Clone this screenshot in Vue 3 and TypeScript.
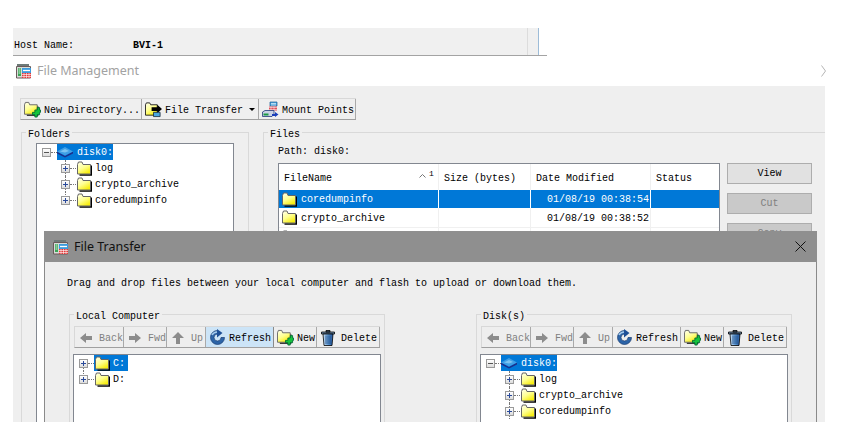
<script setup lang="ts">
interface TreeNode { label: string; level: number; icon: string; open?: boolean; selected?: boolean; line?: string }
interface ToolButton { label: string; icon: string; disabled?: boolean; hover?: boolean; caret?: boolean }

const diskTree = (tail: string): TreeNode[] => [
  { label: 'disk0:', level: 0, icon: 'disk', open: true, selected: true },
  { label: 'log', level: 1, icon: 'folder', line: 'both' },
  { label: 'crypto_archive', level: 1, icon: 'folder', line: 'both' },
  { label: 'coredumpinfo', level: 1, icon: 'folder', line: tail },
]
const localTree: TreeNode[] = [
  { label: 'C:', level: 0, icon: 'folder', selected: true, line: 'down' },
  { label: 'D:', level: 0, icon: 'folder', line: 'up' },
]
const mainTools: ToolButton[] = [
  { label: 'New Directory...', icon: 'folder-new' },
  { label: 'File Transfer', icon: 'transfer', caret: true },
  { label: 'Mount Points', icon: 'mount' },
]
const navTools = (hover: boolean): ToolButton[] => [
  { label: 'Back', icon: 'back', disabled: true },
  { label: 'Fwd', icon: 'fwd', disabled: true },
  { label: 'Up', icon: 'up', disabled: true },
  { label: 'Refresh', icon: 'refresh', hover },
  { label: 'New', icon: 'folder-new' },
  { label: 'Delete', icon: 'trash' },
]
const files = [
  { name: 'coredumpinfo', date: '01/08/19 00:38:54', selected: true },
  { name: 'crypto_archive', date: '01/08/19 00:38:52', selected: false },
  { name: 'log', date: '01/08/19 00:38:50', selected: false },
]
const panes = [
  { title: 'Local Computer', tools: navTools(true), tree: localTree },
  { title: 'Disk(s)', tools: navTools(false), tree: diskTree('both') },
]
const folderTree = diskTree('up')
</script>

<template>
  <div class="page">
    <svg class="defs" width="0" height="0" aria-hidden="true">
      <defs>
        <linearGradient id="fold" x1="0" y1="0" x2="0.6" y2="1">
          <stop offset="0" stop-color="#fffff0" />
          <stop offset="0.55" stop-color="#ffff90" />
          <stop offset="1" stop-color="#f8ee10" />
        </linearGradient>
        <linearGradient id="can" x1="0" y1="0" x2="1" y2="0">
          <stop offset="0" stop-color="#cfe4f7" />
          <stop offset="0.5" stop-color="#5f9bd6" />
          <stop offset="1" stop-color="#1d4f96" />
        </linearGradient>
        <symbol id="folder" viewBox="0 0 15 15">
          <path d="M14.200 4.500V14H2.500" fill="none" stroke="#000" stroke-width="1.600" />
          <path d="M.5 3.500 1.500 1h3.500l1 2.500h7.500v9.500H.5Z" fill="url(#fold)" stroke="#666" />
        </symbol>
        <symbol id="folder-new" viewBox="0 0 18 18">
          <path d="M14.500 5.500V15H3" fill="none" stroke="#000" stroke-width="1.400" />
          <path d="M.5 4 1.500 1.500h3.500l1 2.500h8v10H.5Z" fill="url(#fold)" stroke="#666" />
          <path d="M11.500 9.500h2.500v-2.500h2.500v2.500h1v2.500h-1v2.500H14v2.500h-2.500V14.500H9V12h2.500Z" fill="#14c43c" stroke="#063" stroke-width=".9" />
        </symbol>
        <symbol id="disk" viewBox="0 0 16 11">
          <path d="M0 5 8 9.500 16 5V7L8 11 0 7Z" fill="#1c2f8c" />
          <path d="M0 5 8 .5 16 5 8 9Z" fill="#3f9fe6" />
          <path d="M3 5 8 2.500 12 4.500 8 6Z" fill="#7cc4f2" />
        </symbol>
        <symbol id="transfer" viewBox="0 0 18 16">
          <path d="M.5 3 1.500 1h3.500l1 2h7v11H.5Z" fill="url(#fold)" stroke="#222" />
          <path d="M7 5.500h6V3l5 4.500-5 4.500V9.500H7Z" fill="#000" />
          <path d="M9 11h7v4.500H9Z" fill="#4aa7e0" stroke="#123" stroke-width=".8" />
        </symbol>
        <symbol id="mount" viewBox="0 0 17 16">
          <path d="M8 .5h7v4H8Z" fill="#4aa7e0" stroke="#1c5b94" stroke-width=".7" />
          <path d="M9 2h5M9 3.500h5" stroke="#fff" stroke-width=".6" />
          <path d="M7 5h8v4H7Z" fill="#e0505a" />
          <path d="M7 6h8M7 8h8M9 5v4M12 5v4" stroke="#fff" stroke-width=".5" />
          <path d="M.5 10.500 3 9h9v3.500l-2 2.500H.5Z" fill="#c9d3e6" stroke="#223a7a" stroke-width=".8" />
          <path d="M1.500 12h5v2h-5Z" fill="#1c9a44" />
          <path d="M10 12.500h3V10.500l3.500 2.500-3.500 2.500v-1h-3Z" fill="#1b3fbb" />
        </symbol>
        <symbol id="app-mark" viewBox="0 0 16 16">
          <path d="M1 1h12v3H1Z" fill="#6f7a78" />
          <path d="M.5 3.500h14V15H.5Z" fill="#d8dcd8" stroke="#6a5a5a" />
          <path d="M2 5h3v8H2Z" fill="#3aa655" />
          <path d="M2.500 6h2M2.500 8h2M2.500 10h2" stroke="#fff" stroke-width=".8" />
          <path d="M6 5h9v5H6Z" fill="#3b9bdc" />
          <path d="M7 7.500h7" stroke="#fff" stroke-width="1.300" />
          <path d="M6 10h9v5H6Z" fill="#e23b3b" />
          <path d="M6 11.500h9M6 13.500h9M8 10v5M10.500 10v5M13 10v5" stroke="#fff" stroke-width=".6" />
        </symbol>
        <symbol id="back" viewBox="0 0 12 12"><path d="M0 6 6 1v3h6v4H6v3Z" fill="#8c8c8c" /></symbol>
        <symbol id="fwd" viewBox="0 0 12 12"><path d="M12 6 6 1v3H0v4h6v3Z" fill="#8c8c8c" /></symbol>
        <symbol id="up" viewBox="0 0 12 12"><path d="M6 0 12 6H8v6H4V6H0Z" fill="#8c8c8c" /></symbol>
        <symbol id="refresh" viewBox="0 0 17 17">
          <path d="M8.500 1.500a7 7 0 1 0 7 7h-3.500a3.500 3.500 0 1 1-3.500-3.500Z" fill="#2c64a8" stroke="#173b70" stroke-width=".7" />
          <path d="M8 0 13.500 4 8 8.500Z" fill="#1d4f96" />
          <path d="M3 6a6 6 0 0 1 5-3" fill="none" stroke="#a8cdee" stroke-width="1.500" />
        </symbol>
        <symbol id="trash" viewBox="0 0 14 16">
          <path d="M5 .5h4v1.500H5ZM.5 2h13v2H.5Z" fill="#6f8fb0" stroke="#000" stroke-width=".8" />
          <path d="M2 4h10l-1 11.500H3Z" fill="url(#can)" stroke="#000" stroke-width=".8" />
          <path d="M5 5.500v8.500M7 5.500v8.500M9 5.500v8.500" stroke="#123a70" stroke-width=".7" />
        </symbol>
      </defs>
    </svg>

    <header class="host">
      <span class="host-key">Host Name:</span>
      <strong class="host-value">BVI-1</strong>
      <i class="host-rule" />
      <i class="host-blue" />
    </header>

    <div class="title">
      <svg class="title-icon"><use href="#app-mark" /></svg>
      <span>File Management</span>
      <svg class="chevron" viewBox="0 0 5 12"><path d="M.5 .5 4.500 6 .5 11.500" fill="none" stroke="#b5b5b5" /></svg>
    </div>

    <main class="panel">
      <div class="toolbar main-tools">
        <button v-for="t in mainTools" :key="t.label" class="tool" type="button">
          <svg class="ico" :class="`ico-${t.icon}`"><use :href="`#${t.icon}`" /></svg>
          <span>{{ t.label }}</span>
          <i v-if="t.caret" class="caret" />
        </button>
      </div>

      <div class="groups">
        <fieldset class="group folders">
          <legend>Folders</legend>
          <div class="tree folder-tree">
            <div v-for="n in folderTree" :key="n.label" class="row" :class="`lvl-${n.level}`">
              <span class="exp" :class="[n.open ? 'minus' : 'plus', n.line ? `line-${n.line}` : '']" />
              <span class="dash" />
              <span class="node" :class="{ sel: n.selected, isdisk: n.icon === 'disk' }">
                <svg class="node-ico" :class="`ni-${n.icon}`"><use :href="`#${n.icon}`" /></svg>
                <span class="node-label">{{ n.label }}</span>
              </span>
            </div>
          </div>
        </fieldset>

        <fieldset class="group filesgrp">
          <legend>Files</legend>
          <div class="path">Path: disk0:</div>
          <div class="files-row">
            <div class="table">
              <div class="tr head">
                <span class="td c-name">FileName<i class="sort"><svg viewBox="0 0 7 4"><path d="M.5 3.500 3.500 .5 6.500 3.500" fill="none" stroke="#777" /></svg><b>1</b></i></span>
                <span class="td c-size">Size (bytes)</span>
                <span class="td c-date">Date Modified</span>
                <span class="td c-stat">Status</span>
              </div>
              <div v-for="f in files" :key="f.name" class="tr" :class="{ picked: f.selected }">
                <span class="td c-name">
                  <svg class="file-ico"><use href="#folder" /></svg>{{ f.name }}
                </span>
                <span class="td c-size" />
                <span class="td c-date date">{{ f.date }}</span>
                <span class="td c-stat" />
              </div>
            </div>
            <div class="side">
              <button class="sbtn" type="button">View</button>
              <button class="sbtn off" type="button">Cut</button>
              <button class="sbtn off" type="button">Copy</button>
            </div>
          </div>
        </fieldset>
      </div>

      <section class="dialog">
        <div class="dlg-head">
          <svg class="title-icon"><use href="#app-mark" /></svg>
          <span>File Transfer</span>
          <svg class="close" viewBox="0 0 11 11"><path d="M.5 .5 10.500 10.500M10.500 .5 .5 10.500" stroke="#111" fill="none" /></svg>
        </div>
        <div class="dlg-body">
          <p class="msg">Drag and drop files between your local computer and flash to upload or download them.</p>
          <div class="panes">
            <fieldset v-for="p in panes" :key="p.title" class="group pane">
              <legend>{{ p.title }}</legend>
              <div class="toolbar nav-tools">
                <button v-for="t in p.tools" :key="t.label" class="tool" :class="{ dim: t.disabled, hot: t.hover }" type="button">
                  <svg class="ico" :class="`ico-${t.icon}`"><use :href="`#${t.icon}`" /></svg>
                  <span>{{ t.label }}</span>
                </button>
              </div>
              <div class="tree pane-tree">
                <div v-for="n in p.tree" :key="n.label" class="row" :class="`lvl-${n.level}`">
                  <span class="exp" :class="[n.open ? 'minus' : 'plus', n.line ? `line-${n.line}` : '']" />
                  <span class="dash" />
                  <span class="node" :class="{ sel: n.selected, isdisk: n.icon === 'disk' }">
                    <svg class="node-ico" :class="`ni-${n.icon}`"><use :href="`#${n.icon}`" /></svg>
                    <span class="node-label">{{ n.label }}</span>
                  </span>
                </div>
              </div>
            </fieldset>
          </div>
        </div>
      </section>
    </main>
  </div>
</template>

<style scoped>
.page {
  width: 845px;
  height: 445px;
  overflow: hidden;
  background: #fff;
  padding-top: 28px;
  box-sizing: border-box;
  font: 10px/12px "Liberation Mono", monospace;
  color: #000;
}
.defs { position: absolute; }
.host {
  position: relative;
  box-sizing: border-box;
  margin-left: 13px;
  width: 534px;
  height: 28px;
  border-bottom: 1px solid #a3a3a3;
  background: linear-gradient(to right, #f0f0f0 525px, #fff 525px);
  display: flex;
  align-items: center;
  padding: 8px 0 0 1px;
}
.host-key { width: 119px; }
.host-value { font-weight: 700; }
.host-rule, .host-blue { position: absolute; top: 0; bottom: 0; width: 1px; }
.host-rule { left: 514px; background: #dcdcdc; }
.host-blue { left: 525px; background: #9dbcd8; }
.title {
  height: 30px;
  display: flex;
  align-items: center;
  padding-left: 16px;
  gap: 5px;
  color: #a2a2a2;
  font: 12.5px/16px "Noto Sans", sans-serif;
  position: relative;
}
.title-icon { width: 16px; height: 16px; flex: none; }
.chevron { position: absolute; left: 821px; top: 9px; width: 5px; height: 12px; }
.panel {
  position: relative;
  box-sizing: border-box;
  margin-left: 13px;
  width: 812px;
  height: 336px;
  overflow: hidden;
  background: #efefef;
  padding-top: 12px;
}
.toolbar {
  display: grid;
  box-sizing: border-box;
  height: 22px;
  border-top: 1px solid #d8d8d8;
  border-left: 1px solid #d8d8d8;
  border-bottom: 1px solid #a0a0a0;
}
.main-tools {
  margin-left: 7px;
  width: 336px;
  grid-template-columns: 121px 117px 97px;
}
.nav-tools {
  width: 306px;
  grid-template-columns: 49px 43px 39px 68px 43px 63px;
}
.tool {
  appearance: none;
  border: 0;
  border-right: 1px solid #a9a9a9;
  background: transparent;
  margin: 0;
  padding: 0 3px;
  font: inherit;
  color: inherit;
  display: flex;
  align-items: center;
  gap: 3px;
  white-space: nowrap;
}
.tool span { padding-top: 4px; }
.nav-tools .tool { justify-content: space-between; }
.tool.dim { color: #808080; }
.tool.hot { background: #cce4f7; border-right-color: #8a8a8a; }
.ico { flex: none; width: 17px; height: 17px; margin-top: 1px; }
.ico-back, .ico-fwd, .ico-up { width: 12px; height: 12px; margin-left: 2px; margin-right: 4px; }
.ico-trash { width: 14px; height: 16px; margin-left: 1px; margin-right: 3px; }
.caret {
  margin-left: 3px;
  margin-top: 1px;
  width: 0;
  height: 0;
  border: 3px solid transparent;
  border-top: 3px solid #000;
  border-bottom: 0;
}
.groups { display: flex; gap: 14px; margin: 4px 0 0 8px; }
.group {
  margin: 0;
  min-width: 0;
  box-sizing: border-box;
  border: 1px solid #d9d9d9;
  padding: 0;
}
.group legend { padding: 5px 2px 0; margin-left: -10px; line-height: 12px; }
.pane.group legend { margin-left: 0; }
.folders { width: 228px; height: 300px; flex: none; padding: 2px 14px 0; }
.filesgrp { width: 570px; height: 300px; flex: none; border-right: 0; padding: 0 0 0 14px; }
.tree {
  box-sizing: border-box;
  background: #fff;
  border: 1px solid #828790;
  height: 300px;
}
.folder-tree { width: 198px; }
.row {
  position: relative;
  display: flex;
  align-items: center;
  height: 16px;
  padding-left: 5px;
}
.row.lvl-1 { padding-left: 24px; }
.exp {
  position: relative;
  flex: none;
  box-sizing: border-box;
  width: 9px;
  height: 9px;
  border: 1px solid #9a9a9a;
  background: linear-gradient(#fff, #dcdcdc);
}
.exp::before {
  content: "";
  position: absolute;
  left: 1px;
  top: 3px;
  width: 5px;
  height: 1px;
  background: #2a4a9a;
}
.minus::before { background: #555; }
.plus::after {
  content: "";
  position: absolute;
  left: 3px;
  top: 1px;
  width: 1px;
  height: 5px;
  background: #2a4a9a;
}
.row:has(.line-both)::before, .row:has(.line-up)::before, .row:has(.line-down)::before {
  content: "";
  position: absolute;
  width: 0;
  border-left: 1px dotted #777;
}
.row:has(.line-both)::before { left: 28px; top: 0; bottom: 0; }
.row:has(.line-up)::before { left: 28px; top: 0; height: 3px; }
.row:has(.line-down)::before { left: 9px; top: 13px; height: 3px; }
.row.lvl-0:has(.line-up)::before { left: 9px; }
.dash {
  flex: none;
  width: 6px;
  height: 0;
  border-top: 1px dotted #777;
}
.node {
  display: flex;
  align-items: center;
  gap: 3px;
  height: 16px;
  padding: 0 3px 0 1px;
  white-space: nowrap;
}
.node.isdisk { padding: 0; gap: 4px; }
.node.sel { background: #0078d7; color: #fff; }
.node-label { padding-top: 2px; }
.node-ico { flex: none; }
.ni-folder { width: 15px; height: 15px; }
.ni-disk { width: 16px; height: 12px; }
.path { margin: 5px 0; height: 12px; line-height: 12px; }
.files-row { display: flex; gap: 7px; }
.table {
  box-sizing: border-box;
  width: 442px;
  height: 300px;
  background: #fff;
  border: 1px solid #828790;
  flex: none;
}
.tr { display: flex; height: 18px; border-bottom: 1px solid #f0f0f0; }
.tr.head { height: 26px; border-bottom: 0; }
.tr.picked { background: #0078d7; color: #fff; height: 18px; border-bottom: 0; }
.tr.picked + .tr { height: 19px; }
.td {
  box-sizing: border-box;
  display: flex;
  align-items: center;
  padding: 2px 0 0 5px;
  border-right: 1px solid #f0f0f0;
  white-space: nowrap;
}
.head .td { padding-top: 4px; }
.tr.picked .td { border-right-color: #fff; }
.c-name { width: 160px; padding-left: 3px; position: relative; }
.head .c-name { padding-left: 5px; }
.c-size { width: 92px; }
.c-date { width: 120px; }
.c-stat { width: 68px; border-right: 0; }
.date { justify-content: flex-end; padding-right: 1px; }
.file-ico { width: 15px; height: 15px; margin: -2px 4px 0 0; flex: none; }
.sort { position: absolute; left: 140px; top: 6px; display: flex; font-style: normal; gap: 3px; }
.sort svg { width: 7px; height: 4px; margin-top: 4px; }
.sort b { font-weight: 400; font-size: 8px; line-height: 8px; }
.side { display: flex; flex-direction: column; gap: 9px; }
.sbtn {
  appearance: none;
  box-sizing: border-box;
  width: 85px;
  height: 21px;
  margin: 0;
  padding: 1px 0 0;
  border: 1px solid #adadad;
  background: #e1e1e1;
  font: inherit;
  color: #000;
}
.sbtn.off { background: #c9c9c9; color: #808080; }
.dialog {
  position: absolute;
  left: 31px;
  top: 145px;
  box-sizing: border-box;
  width: 773px;
  height: 260px;
  background: #eeeeee;
  border: 1px solid #8a8a8a;
  border-top: 0;
}
.dlg-head {
  position: relative;
  height: 31px;
  background: #8f8f8f;
  margin: 0 -1px;
  display: flex;
  align-items: center;
  gap: 5px;
  padding: 0 0 0 9px;
  color: #111;
  font: 12.5px/16px "Noto Sans", sans-serif;
}
.close { position: absolute; right: 11px; top: 10px; width: 11px; height: 11px; }
.dlg-body { padding: 16px 0 0 22px; }
.msg { margin: 0; height: 12px; white-space: nowrap; }
.panes { display: flex; gap: 91px; margin: 16px 0 0 2px; }
.pane { width: 316px; height: 200px; padding: 3px 4px 0 4px; flex: none; }
.pane-tree { width: 308px; margin: 6px 0 0 -1px; }
</style>

<style>
html, body { margin: 0; background: #fff; }
</style>
